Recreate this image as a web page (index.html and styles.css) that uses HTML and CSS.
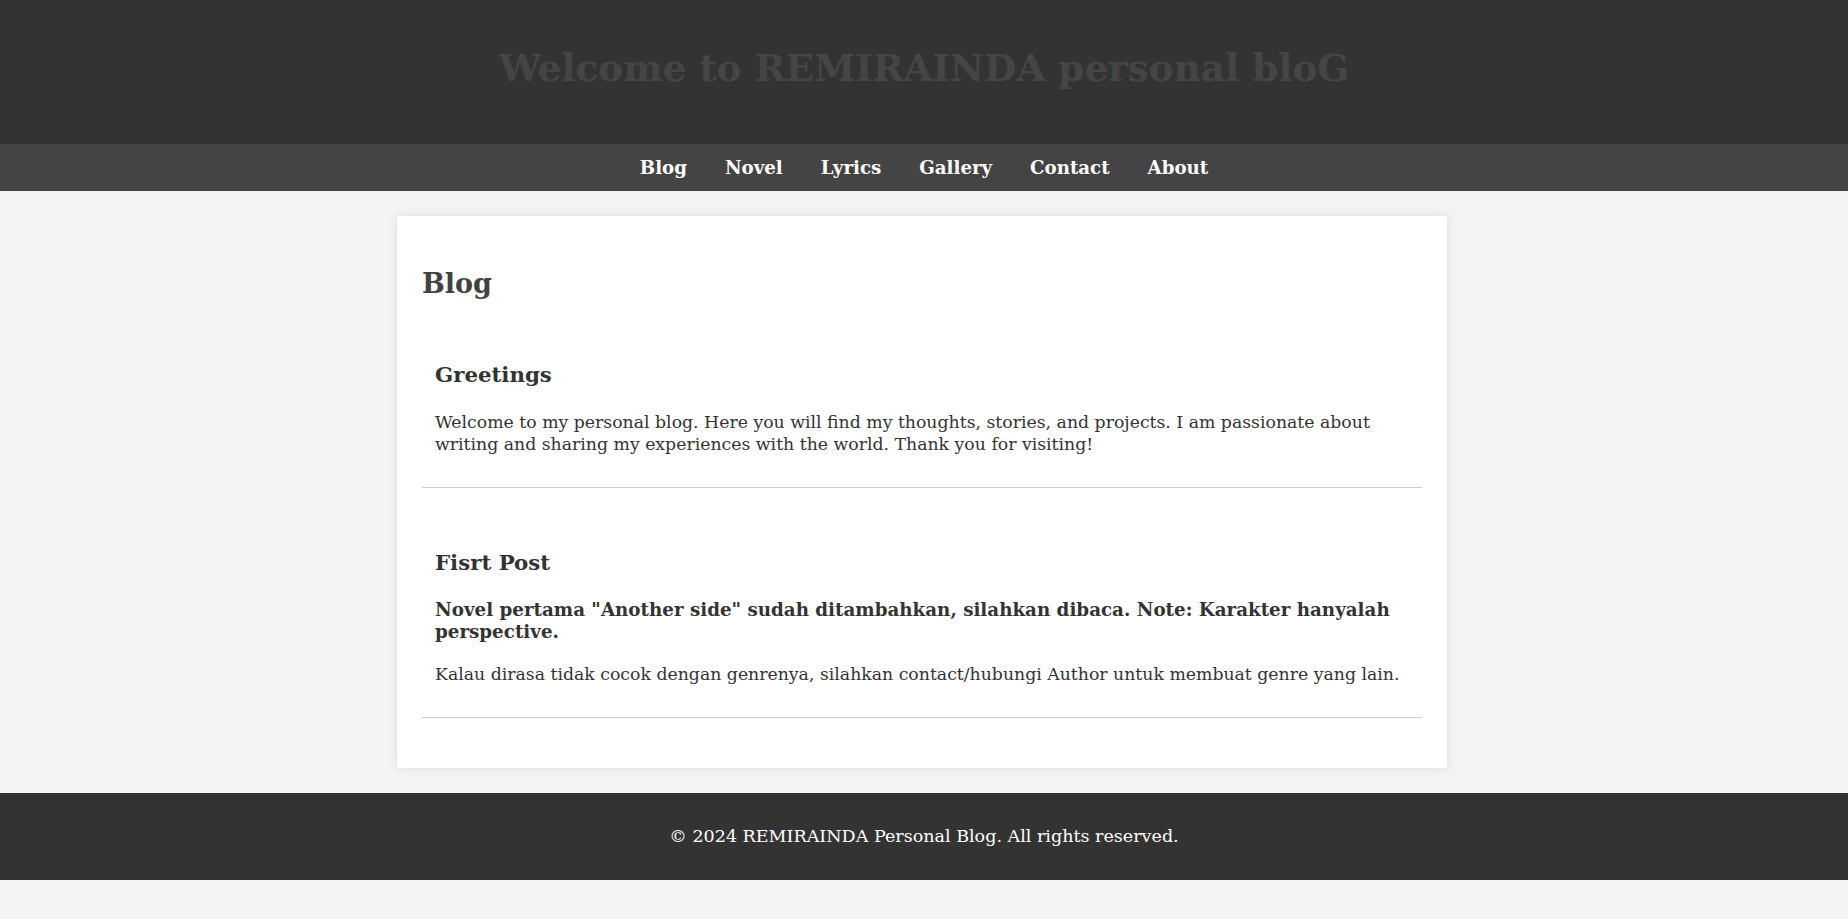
FILE: index.html
```html
<!DOCTYPE html>
<html lang="en">
<head>
<meta charset="utf-8">
<title>REMIRAINDA personal bloG</title>
<link rel="stylesheet" href="styles.css">
</head>
<body>
<header class="site-header">
  <h1 class="site-title">Welcome to REMIRAINDA personal bloG</h1>
</header>
<nav class="site-nav">
  <a href="#" class="nav-link">Blog</a>
  <a href="#" class="nav-link">Novel</a>
  <a href="#" class="nav-link">Lyrics</a>
  <a href="#" class="nav-link">Gallery</a>
  <a href="#" class="nav-link">Contact</a>
  <a href="#" class="nav-link">About</a>
</nav>
<main class="card">
  <h1 class="page-title">Blog</h1>
  <section class="post">
    <h2 class="post-title">Greetings</h2>
    <p class="post-text">Welcome to my personal blog. Here you will find my thoughts, stories, and projects. I am passionate about writing and sharing my experiences with the world. Thank you for visiting!</p>
  </section>
  <section class="post">
    <h2 class="post-title">Fisrt Post</h2>
    <p class="post-text post-strong">Novel pertama "Another side" sudah ditambahkan, silahkan dibaca. Note: Karakter hanyalah perspective.</p>
    <p class="post-text">Kalau dirasa tidak cocok dengan genrenya, silahkan contact/hubungi Author untuk membuat genre yang lain.</p>
  </section>
</main>
<footer class="site-footer">
  <p class="footer-text">© 2024 REMIRAINDA Personal Blog. All rights reserved.</p>
</footer>
</body>
</html>
```
FILE: styles.css
```css
* { box-sizing: border-box; }

html, body {
  margin: 0;
  padding: 0;
}

body {
  background: #f4f4f4;
  color: #333;
  font-family: "DejaVu Serif", "Liberation Serif", serif;
  font-size: 17.3px;
  line-height: 22px;
}

.site-header {
  background: #333;
  height: 144px;
  padding-top: 48px;
  text-align: center;
}

.site-title {
  margin: 0;
  color: #454545;
  font-size: 37.3px;
  line-height: 40px;
  font-weight: bold;
}

.site-nav {
  background: #444;
  height: 47px;
  padding-top: 13px;
  display: flex;
  justify-content: center;
  gap: 38px;
}

.nav-link {
  color: #fff;
  text-decoration: none;
  font-weight: bold;
  font-size: 18.2px;
  line-height: 22px;
}

.card {
  display: block;
  width: 1050px;
  margin: 25px auto 25px calc(50% - 527px);
  padding: 25px;
  background: #fff;
  box-shadow: 0 0 10px rgba(0, 0, 0, 0.1);
}

.page-title {
  margin: 24px 0 23px;
  color: #424242;
  font-size: 27px;
  line-height: 37px;
}

.post {
  padding: 13px;
  margin-bottom: 25px;
  border-bottom: 1px solid #ccc;
}

.post-title {
  margin: 24px 0 23px;
  font-size: 21.3px;
  line-height: 26px;
}

.post-text {
  margin: 19px 0;
}

.post-strong {
  font-weight: bold;
  font-size: 18.3px;
  margin-bottom: 20px;
}

.site-footer {
  background: #333;
  color: #fff;
  height: 87px;
  padding-top: 32px;
  text-align: center;
}

.footer-text {
  margin: 0;
  font-size: 17.55px;
}
```
